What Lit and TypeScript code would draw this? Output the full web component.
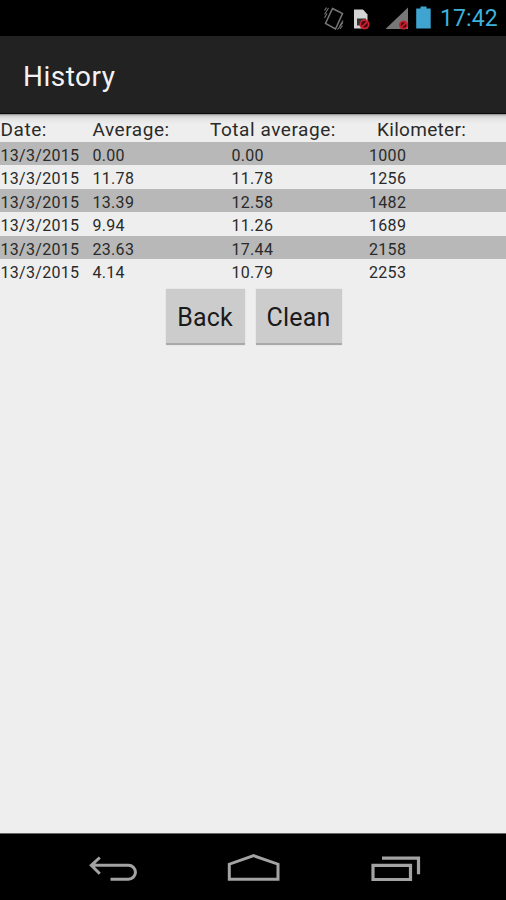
import { LitElement, html, css } from "lit";
import { customElement } from "lit/decorators.js";

const ROWS = [
  ["13/3/2015", "0.00", "0.00", "1000"],
  ["13/3/2015", "11.78", "11.78", "1256"],
  ["13/3/2015", "13.39", "12.58", "1482"],
  ["13/3/2015", "9.94", "11.26", "1689"],
  ["13/3/2015", "23.63", "17.44", "2158"],
  ["13/3/2015", "4.14", "10.79", "2253"],
];

@customElement("app-root")
export class AppRoot extends LitElement {
  static styles = css`
    :host {
      display: flex;
      flex-direction: column;
      width: 506px;
      height: 900px;
      overflow: hidden;
      background: #eee;
      color: #2a2a2a;
      font-family: Roboto, sans-serif;
    }
    svg { display: block; }
    .status {
      flex: none;
      height: 36px;
      background: #000;
      display: flex;
      justify-content: flex-end;
    }
    .clock {
      width: 66px;
      line-height: 38px;
      font-size: 23px;
      letter-spacing: 0.1px;
      color: #3fb0dc;
    }
    .bar {
      flex: none;
      box-sizing: border-box;
      height: 78px;
      padding-left: 23px;
      background: #222;
      border-bottom: 1px solid #080808;
      color: #f3f3f3;
      font-size: 28px;
      font-weight: 400;
      letter-spacing: 0.5px;
      line-height: 82px;
    }
    .content {
      flex: 1;
      background: linear-gradient(#8c8c8c 0, #d2d2d2 2px, #e4e4e4 5px, #eee 10px);
    }
    .row {
      display: grid;
      grid-template-columns: 92px 139px 137.5px 1fr;
      height: 23.45px;
      line-height: 27px;
      font-size: 16px;
      letter-spacing: 0.3px;
      padding-left: 0.5px;
      box-sizing: border-box;
      white-space: nowrap;
    }
    .row.dark { background: #b8b8b8; }
    .row.head {
      grid-template-columns: 92px 117.5px 167px 1fr;
      height: 28px;
      line-height: 31px;
      font-size: 19px;
      letter-spacing: 0.55px;
    }
    .row.head span:last-child { letter-spacing: 0.3px; }
    .buttons {
      display: flex;
      justify-content: center;
      gap: 11px;
      padding: 6px 0 0 1px;
    }
    button {
      box-sizing: border-box;
      width: 79px;
      height: 56px;
      padding: 3px 0 0;
      border: 0;
      border-bottom: 2px solid #a9a9a9;
      border-radius: 1px;
      background: #ccc;
      box-shadow: 0 0 1px #aaa;
      color: #1a1a1a;
      font: 25px Roboto, sans-serif;
      letter-spacing: 0.2px;
    }
    button.wide { width: 86px; }
    .nav {
      flex: none;
      box-sizing: border-box;
      height: 67px;
      background: #000;
      border-top: 1px solid #666;
    }
  `;

  render() {
    return html`
      <header class="status">
        <svg width="120" height="36" viewBox="320 0 120 36">
          <g fill="none" stroke="#777" stroke-width="1.5">
            <path d="M332.500 8.500 342.500 13.500 335.500 29 325.500 23.500Z" />
            <path d="m324.500 10.500 2-3M324.500 14.500l4-6.500M324.500 18l2.500-4.500M339.500 26.500l3.500-6M337.500 29.500l5.500-7M340 29l2.500-3.500" stroke-width="1.100" />
          </g>
          <path d="M354 9.500h9l4.500 5V28.500H354Z" fill="#d4d4d4" />
          <path d="M357 18.500h9v7h-9Z" fill="#333" />
          <g fill="#430910" stroke="#c7202f" stroke-width="1.800">
            <circle cx="364.500" cy="24.300" r="4.200" />
            <path d="m361.500 27.300 6-6" />
          </g>
          <path d="M408 7.500v21.500h-22.500Z" fill="#777" />
          <g fill="#430910" stroke="#c7202f" stroke-width="1.800">
            <circle cx="403.600" cy="25" r="3.700" />
            <path d="m401 27.600 5.200-5.200" />
          </g>
          <path d="M420.500 6.500h6v2h4.200v20h-14.500V8.500h4.300Z" fill="#3fa4cf" />
        </svg>
        <span class="clock">17:42</span>
      </header>
      <div class="bar">History</div>
      <main class="content">
        <div class="row head">
          <span>Date:</span><span>Average:</span><span>Total average:</span><span>Kilometer:</span>
        </div>
        ${ROWS.map(
          (r, i) => html`<div class="row ${i % 2 ? "" : "dark"}">${r.map((c) => html`<span>${c}</span>`)}</div>`
        )}
        <div class="buttons">
          <button>Back</button><button class="wide">Clean</button>
        </div>
      </main>
      <nav class="nav">
        <svg width="506" height="66" viewBox="0 834 506 66" fill="none" stroke="#a3a3a3" stroke-width="3">
          <path d="M91 865.300h37.500a6.900 6.900 0 0 1 0 13.900H110.500M99.800 857.500 91.300 865.300 99.800 873.700" />
          <path d="M229.300 879.300V864.200L253.700 855.700 278 864.200V879.300Z" />
          <path d="M373 865.300h37.500v14.200h-37.500ZM382 858.200h36.500V874.300" stroke-width="3.200" />
        </svg>
      </nav>
    `;
  }
}
